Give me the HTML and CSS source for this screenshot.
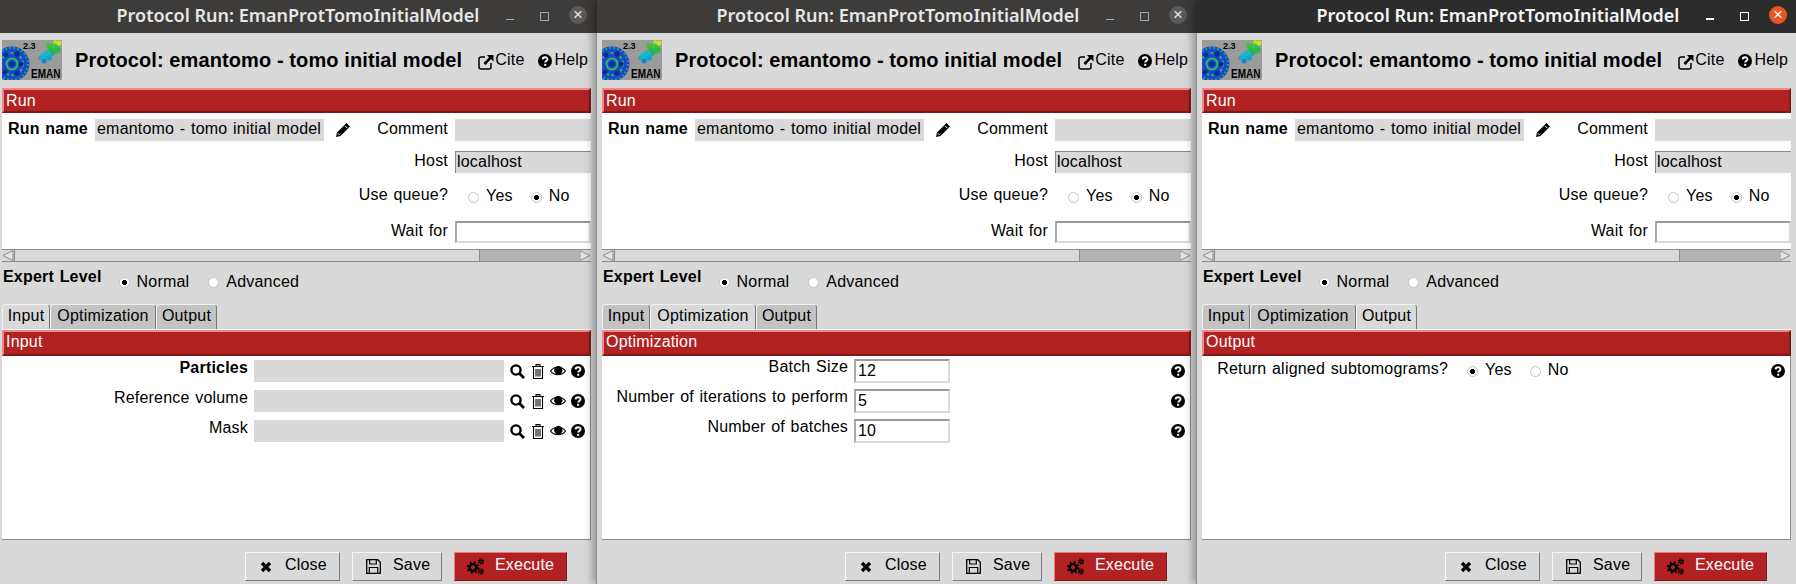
FILE: index.html
```html
<!DOCTYPE html>
<html>
<head>
    <title>Protocol Run: EmanProtTomoInitialModel</title>
    <link rel="stylesheet" href="styles.css">
</head>
<body>
  <svg class="defs" xmlns="http://www.w3.org/2000/svg">
    <symbol id="i-link" viewBox="0 0 16 16">
      <path d="M7 3H3a2 2 0 0 0-2 2v8a2 2 0 0 0 2 2h8a2 2 0 0 0 2-2V9" fill="none" stroke="#000" stroke-width="1.5"/>
      <path d="M9 1h6.500v6.500L13 5 7.500 11 5.500 9 11 3.500z" fill="#000"/>
    </symbol>
    <symbol id="i-help" viewBox="0 0 14 14">
      <circle cx="7" cy="7" r="7" fill="#000"/>
      <path d="M4.600 5.400C4.700 2.600 9.500 2.600 9.500 5.200c0 1.800-2.300 1.700-2.300 3.300" fill="none" stroke="#fff" stroke-width="1.900"/>
      <rect x="6.200" y="9.800" width="2" height="2" fill="#fff"/>
    </symbol>
    <symbol id="i-pencil" viewBox="0 0 14 14">
      <path d="M10.500 0 14 3.500 4.500 13 0 14l1-4.500z" fill="#000"/>
      <path d="M1.800 10.200 3.800 12.200M9 2.800l2.200 2.200" fill="none" stroke="#fff" stroke-width="1"/>
    </symbol>
    <symbol id="i-search" viewBox="0 0 15 15">
      <circle cx="6" cy="6" r="4.600" fill="none" stroke="#000" stroke-width="2.400"/>
      <path d="M9.500 9.500 14 14" fill="none" stroke="#000" stroke-width="2.800"/>
    </symbol>
    <symbol id="i-trash" viewBox="0 0 12 15">
      <path d="M4 2V.6h4V2M0 2.500h12M1.500 3v11.500h9V3M4 5v7.500M6 5v7.500M8 5v7.500" fill="none" stroke="#000" stroke-width="1.100"/>
    </symbol>
    <symbol id="i-eye" viewBox="0 0 16 12">
      <path d="M.5 6C4 1 12 1 15.500 6 12 11 4 11 .5 6z" fill="#fff" stroke="#000" stroke-width="1.200"/>
      <circle cx="8.300" cy="5.300" r="4.200" fill="#000"/>
    </symbol>
    <symbol id="i-close" viewBox="0 0 12 12">
      <path d="M2 2l8 8M10 2l-8 8" fill="none" stroke="#000" stroke-width="3.400"/>
    </symbol>
    <symbol id="i-save" viewBox="0 0 15 15">
      <path d="M.7.7h11l2.600 2.600v11H.7z" fill="none" stroke="#000" stroke-width="1.300"/>
      <path d="M3.700 1v4h6.600V1M3.300 14V8.500h8.400V14" fill="none" stroke="#000" stroke-width="1.200"/>
    </symbol>
    <symbol id="i-gears" viewBox="0 0 17 17">
      <circle cx="6" cy="9.500" r="3.400" fill="none" stroke="#000" stroke-width="2.400"/>
      <circle cx="6" cy="9.500" r="5.300" fill="none" stroke="#000" stroke-width="1.800" stroke-dasharray="2.100 2.060"/>
      <circle cx="14" cy="3.500" r="1.400" fill="none" stroke="#000" stroke-width="1.300"/>
      <circle cx="14" cy="3.500" r="2.700" fill="none" stroke="#000" stroke-width="1.200" stroke-dasharray="1.100 1.020"/>
      <circle cx="14" cy="13.500" r="1.400" fill="none" stroke="#000" stroke-width="1.300"/>
      <circle cx="14" cy="13.500" r="2.700" fill="none" stroke="#000" stroke-width="1.200" stroke-dasharray="1.100 1.020"/>
    </symbol>
    <symbol id="i-logo" viewBox="0 0 60 40">
      <rect width="60" height="40" fill="#9b9b9b"/>
      <circle cx="10" cy="24" r="17.500" fill="#1b45d0"/>
      <circle cx="10" cy="24" r="16" fill="none" stroke="#1fa868" stroke-width="2" stroke-dasharray="2 2"/>
      <circle cx="10" cy="24" r="11" fill="none" stroke="#1fb060" stroke-width="2.200" stroke-dasharray="3 2"/>
      <circle cx="10" cy="24" r="5.500" fill="none" stroke="#2ec050" stroke-width="2"/>
      <circle cx="4" cy="15" r="2.500" fill="#0d2a8c"/>
      <circle cx="15" cy="14" r="2.500" fill="#0d2a8c"/>
      <circle cx="19" cy="24" r="2.500" fill="#0d2a8c"/>
      <circle cx="10" cy="24" r="2.500" fill="#0d2a8c"/>
      <circle cx="15" cy="33" r="2.500" fill="#0d2a8c"/>
      <circle cx="3" cy="32" r="2.500" fill="#0d2a8c"/>
      <circle cx="49" cy="8" r="3.500" fill="#2fb84a"/>
      <circle cx="53" cy="5" r="3.500" fill="#3cc63c"/>
      <circle cx="55" cy="10" r="3.500" fill="#2fb84a"/>
      <circle cx="50" cy="13" r="3" fill="#22b070"/>
      <circle cx="57" cy="3" r="2.500" fill="#d8e01e"/>
      <circle cx="53" cy="2" r="2" fill="#b8d820"/>
      <circle cx="46" cy="5" r="2" fill="#48c030"/>
      <circle cx="45" cy="14" r="3.500" fill="#14b8c9"/>
      <circle cx="41" cy="17" r="3.500" fill="#14b8c9"/>
      <circle cx="47" cy="18" r="3" fill="#14a4d0"/>
      <circle cx="42" cy="21" r="2.500" fill="#1a7fd0"/>
      <circle cx="38" cy="18" r="1.800" fill="#12a8d0"/>
    </symbol>
  </svg>

  <div class="window">
    <div class="titlebar">
      <div class="title-text">Protocol Run: EmanProtTomoInitialModel</div>
      <div class="controls">
        <span class="ctl"><span class="ctl-min"></span></span>
        <span class="ctl"><span class="ctl-max"></span></span>
        <span class="ctl"><span class="ctl-close">&#215;</span></span>
      </div>
    </div>
    <div class="header">
      <div class="logo">
        <svg class="logo-img"><use href="#i-logo"/></svg>
        <span class="logo-ver">2.3</span>
        <span class="logo-name">EMAN</span>
      </div>
      <div class="proto-title">Protocol: emantomo - tomo initial model</div>
      <div class="hlink cite"><svg class="ico-link"><use href="#i-link"/></svg>Cite</div>
      <div class="hlink help"><svg class="ico-14"><use href="#i-help"/></svg>Help</div>
    </div>
    <div class="bar">Run</div>
    <div class="run-panel">
      <div class="run-name">Run name</div>
      <div class="field">emantomo - tomo initial model</div>
      <div class="pencil"><svg class="ico-14"><use href="#i-pencil"/></svg></div>
      <div class="run-label">Comment</div>
      <div class="field"></div>
      <div class="run-label col4">Host</div>
      <div class="field sunken">localhost</div>
      <div class="run-label col4 queue-label">Use queue?</div>
      <div class="radios queue">
        <input type="radio" name="q1"><label>Yes</label>
        <input type="radio" name="q1" checked><label>No</label>
      </div>
      <div class="run-label col4 wait">Wait for</div>
      <div class="field entry wait"></div>
    </div>
    <div class="hscroll">
      <span class="sb-arrow"><svg class="sb-ico" viewBox="0 0 12 11"><path d="M11 .5v10L1 5.500z" fill="#e4e4e4" stroke="#8a8a8a"/></svg></span>
      <span class="sb-thumb"></span>
      <span class="sb-trough"></span>
      <span class="sb-arrow"><svg class="sb-ico" viewBox="0 0 12 11"><path d="M1 .5v10L11 5.500z" fill="#e4e4e4" stroke="#8a8a8a"/></svg></span>
    </div>
    <div class="expert">
      <div class="expert-label">Expert Level</div>
      <div class="radios">
        <input type="radio" name="e1" checked><label>Normal</label>
        <input type="radio" name="e1"><label>Advanced</label>
      </div>
    </div>
    <div class="tabs">
      <div class="tab tab-input selected">Input</div>
      <div class="tab tab-opt">Optimization</div>
      <div class="tab tab-out">Output</div>
    </div>
    <div class="tab-line"></div>
    <div class="bar tab-bar">Input</div>
    <div class="form-panel">
      <div class="row">
        <div class="row-label"><b>Particles</b></div>
        <div class="field pointer"></div>
        <div class="row-icons">
          <svg class="ico-search"><use href="#i-search"/></svg>
          <svg class="ico-trash"><use href="#i-trash"/></svg>
          <svg class="ico-eye"><use href="#i-eye"/></svg>
          <svg class="ico-14"><use href="#i-help"/></svg>
        </div>
      </div>
      <div class="row">
        <div class="row-label">Reference volume</div>
        <div class="field pointer"></div>
        <div class="row-icons">
          <svg class="ico-search"><use href="#i-search"/></svg>
          <svg class="ico-trash"><use href="#i-trash"/></svg>
          <svg class="ico-eye"><use href="#i-eye"/></svg>
          <svg class="ico-14"><use href="#i-help"/></svg>
        </div>
      </div>
      <div class="row">
        <div class="row-label">Mask</div>
        <div class="field pointer"></div>
        <div class="row-icons">
          <svg class="ico-search"><use href="#i-search"/></svg>
          <svg class="ico-trash"><use href="#i-trash"/></svg>
          <svg class="ico-eye"><use href="#i-eye"/></svg>
          <svg class="ico-14"><use href="#i-help"/></svg>
        </div>
      </div>
    </div>
    <div class="footer">
      <div class="btn btn-close"><svg class="ico-x"><use href="#i-close"/></svg>Close</div>
      <div class="btn btn-save"><svg class="ico-save"><use href="#i-save"/></svg>Save</div>
      <div class="btn btn-exec"><svg class="ico-gears"><use href="#i-gears"/></svg>Execute</div>
    </div>
  </div>

  <div class="window">
    <div class="titlebar">
      <div class="title-text">Protocol Run: EmanProtTomoInitialModel</div>
      <div class="controls">
        <span class="ctl"><span class="ctl-min"></span></span>
        <span class="ctl"><span class="ctl-max"></span></span>
        <span class="ctl"><span class="ctl-close">&#215;</span></span>
      </div>
    </div>
    <div class="header">
      <div class="logo">
        <svg class="logo-img"><use href="#i-logo"/></svg>
        <span class="logo-ver">2.3</span>
        <span class="logo-name">EMAN</span>
      </div>
      <div class="proto-title">Protocol: emantomo - tomo initial model</div>
      <div class="hlink cite"><svg class="ico-link"><use href="#i-link"/></svg>Cite</div>
      <div class="hlink help"><svg class="ico-14"><use href="#i-help"/></svg>Help</div>
    </div>
    <div class="bar">Run</div>
    <div class="run-panel">
      <div class="run-name">Run name</div>
      <div class="field">emantomo - tomo initial model</div>
      <div class="pencil"><svg class="ico-14"><use href="#i-pencil"/></svg></div>
      <div class="run-label">Comment</div>
      <div class="field"></div>
      <div class="run-label col4">Host</div>
      <div class="field sunken">localhost</div>
      <div class="run-label col4 queue-label">Use queue?</div>
      <div class="radios queue">
        <input type="radio" name="q2"><label>Yes</label>
        <input type="radio" name="q2" checked><label>No</label>
      </div>
      <div class="run-label col4 wait">Wait for</div>
      <div class="field entry wait"></div>
    </div>
    <div class="hscroll">
      <span class="sb-arrow"><svg class="sb-ico" viewBox="0 0 12 11"><path d="M11 .5v10L1 5.500z" fill="#e4e4e4" stroke="#8a8a8a"/></svg></span>
      <span class="sb-thumb"></span>
      <span class="sb-trough"></span>
      <span class="sb-arrow"><svg class="sb-ico" viewBox="0 0 12 11"><path d="M1 .5v10L11 5.500z" fill="#e4e4e4" stroke="#8a8a8a"/></svg></span>
    </div>
    <div class="expert">
      <div class="expert-label">Expert Level</div>
      <div class="radios">
        <input type="radio" name="e2" checked><label>Normal</label>
        <input type="radio" name="e2"><label>Advanced</label>
      </div>
    </div>
    <div class="tabs">
      <div class="tab tab-input">Input</div>
      <div class="tab tab-opt selected">Optimization</div>
      <div class="tab tab-out">Output</div>
    </div>
    <div class="tab-line"></div>
    <div class="bar tab-bar">Optimization</div>
    <div class="form-panel tight">
      <div class="row">
        <div class="row-label">Batch Size</div>
        <div class="field entry short">12</div>
        <div class="row-icons"><svg class="ico-14"><use href="#i-help"/></svg></div>
      </div>
      <div class="row">
        <div class="row-label">Number of iterations to perform</div>
        <div class="field entry short">5</div>
        <div class="row-icons"><svg class="ico-14"><use href="#i-help"/></svg></div>
      </div>
      <div class="row">
        <div class="row-label">Number of batches</div>
        <div class="field entry short">10</div>
        <div class="row-icons"><svg class="ico-14"><use href="#i-help"/></svg></div>
      </div>
    </div>
    <div class="footer">
      <div class="btn btn-close"><svg class="ico-x"><use href="#i-close"/></svg>Close</div>
      <div class="btn btn-save"><svg class="ico-save"><use href="#i-save"/></svg>Save</div>
      <div class="btn btn-exec"><svg class="ico-gears"><use href="#i-gears"/></svg>Execute</div>
    </div>
  </div>

  <div class="window focused">
    <div class="titlebar">
      <div class="title-text">Protocol Run: EmanProtTomoInitialModel</div>
      <div class="controls">
        <span class="ctl"><span class="ctl-min"></span></span>
        <span class="ctl"><span class="ctl-max"></span></span>
        <span class="ctl"><span class="ctl-close">&#215;</span></span>
      </div>
    </div>
    <div class="header">
      <div class="logo">
        <svg class="logo-img"><use href="#i-logo"/></svg>
        <span class="logo-ver">2.3</span>
        <span class="logo-name">EMAN</span>
      </div>
      <div class="proto-title">Protocol: emantomo - tomo initial model</div>
      <div class="hlink cite"><svg class="ico-link"><use href="#i-link"/></svg>Cite</div>
      <div class="hlink help"><svg class="ico-14"><use href="#i-help"/></svg>Help</div>
    </div>
    <div class="bar">Run</div>
    <div class="run-panel">
      <div class="run-name">Run name</div>
      <div class="field">emantomo - tomo initial model</div>
      <div class="pencil"><svg class="ico-14"><use href="#i-pencil"/></svg></div>
      <div class="run-label">Comment</div>
      <div class="field"></div>
      <div class="run-label col4">Host</div>
      <div class="field sunken">localhost</div>
      <div class="run-label col4 queue-label">Use queue?</div>
      <div class="radios queue">
        <input type="radio" name="q3"><label>Yes</label>
        <input type="radio" name="q3" checked><label>No</label>
      </div>
      <div class="run-label col4 wait">Wait for</div>
      <div class="field entry wait"></div>
    </div>
    <div class="hscroll">
      <span class="sb-arrow"><svg class="sb-ico" viewBox="0 0 12 11"><path d="M11 .5v10L1 5.500z" fill="#e4e4e4" stroke="#8a8a8a"/></svg></span>
      <span class="sb-thumb"></span>
      <span class="sb-trough"></span>
      <span class="sb-arrow"><svg class="sb-ico" viewBox="0 0 12 11"><path d="M1 .5v10L11 5.500z" fill="#e4e4e4" stroke="#8a8a8a"/></svg></span>
    </div>
    <div class="expert">
      <div class="expert-label">Expert Level</div>
      <div class="radios">
        <input type="radio" name="e3" checked><label>Normal</label>
        <input type="radio" name="e3"><label>Advanced</label>
      </div>
    </div>
    <div class="tabs">
      <div class="tab tab-input">Input</div>
      <div class="tab tab-opt">Optimization</div>
      <div class="tab tab-out selected">Output</div>
    </div>
    <div class="tab-line"></div>
    <div class="bar tab-bar">Output</div>
    <div class="form-panel">
      <div class="row return-row">
        <div class="row-label">Return aligned subtomograms?</div>
        <div class="radios return">
          <input type="radio" name="r3" checked><label>Yes</label>
          <input type="radio" name="r3"><label>No</label>
        </div>
        <div class="row-icons"><svg class="ico-14"><use href="#i-help"/></svg></div>
      </div>
    </div>
    <div class="footer">
      <div class="btn btn-close"><svg class="ico-x"><use href="#i-close"/></svg>Close</div>
      <div class="btn btn-save"><svg class="ico-save"><use href="#i-save"/></svg>Save</div>
      <div class="btn btn-exec"><svg class="ico-gears"><use href="#i-gears"/></svg>Execute</div>
    </div>
  </div>
</body>
</html>
```

FILE: styles.css
```css
html, body {
    margin: 0;
    height: 584px;
    overflow: hidden;
}
body {
    display: flex;
    font-family: "Liberation Sans", Arial, sans-serif;
    font-size: 16px;
    letter-spacing: 0.2px;
    word-spacing: 1px;
    color: #000;
    background-color: #d9d9d9;
}
.defs {
    display: none;
}

/* windows */
.window {
    position: relative;
    flex: none;
    width: 600px;
    height: 584px;
    display: flex;
    flex-direction: column;
    background-color: #d9d9d9;
    box-shadow: -3px 0 9px rgba(0, 0, 0, 0.35);
    border-left: 1px solid #8e8e8e;
    box-sizing: border-box;
}
.window:first-of-type {
    margin-left: -4px;
}
.titlebar {
    flex: none;
    height: 33px;
    margin-left: -1px;
    padding-left: 3px;
    display: grid;
    grid-template-columns: 1fr auto 1fr;
    align-items: center;
    background-color: #3d3c3a;
    color: #e6e6e6;
    border-left: 1px solid #2c2b2a;
}
.focused .titlebar {
    background-color: #2c2c2c;
    color: #f4f4f4;
}
.title-text {
    grid-column: 2;
    padding-bottom: 3px;
    font-family: "Noto Sans", sans-serif;
    font-size: 18px;
    font-weight: 600;
    letter-spacing: 0;
    word-spacing: 0;
    white-space: nowrap;
}
.controls {
    grid-column: 3;
    display: flex;
    justify-content: flex-end;
    padding-right: 1px;
}
.ctl {
    width: 34px;
    height: 33px;
    display: flex;
    align-items: center;
    justify-content: center;
}
.ctl-min {
    width: 8px;
    height: 1px;
    margin-top: 5px;
    background-color: #a8a8a8;
}
.ctl-max {
    width: 7px;
    height: 7px;
    border: 1px solid #a8a8a8;
}
.ctl-close {
    width: 18px;
    height: 18px;
    margin-top: -3px;
    border-radius: 50%;
    background-color: #5b5a58;
    color: #e6e6e6;
    font-size: 17px;
    line-height: 18px;
    text-align: center;
}
.focused .ctl-min, .focused .ctl-max {
    background-color: #fff;
    border-color: #fff;
}
.focused .ctl-max {
    background-color: transparent;
}
.focused .ctl-min {
    width: 8px;
    height: 2px;
}
.focused .ctl-close {
    background-color: #e95420;
    color: #fff;
}

/* header */
.header {
    flex: none;
    height: 55px;
    display: flex;
    align-items: center;
    white-space: nowrap;
}
.logo {
    position: relative;
    width: 60px;
    height: 40px;
    margin-left: 5px;
    margin-top: -2px;
    flex: none;
    overflow: hidden;
}
.logo-img {
    display: block;
    width: 60px;
    height: 40px;
}
.logo-ver {
    position: absolute;
    left: 21px;
    top: 1px;
    font-size: 9px;
    font-weight: bold;
    line-height: 10px;
    letter-spacing: 0;
}
.logo-name {
    position: absolute;
    left: 29px;
    top: 28px;
    font-size: 10px;
    font-weight: bold;
    line-height: 11px;
    letter-spacing: 0;
    transform: scaleY(1.2);
}
.proto-title {
    margin-left: 13px;
    font-size: 20px;
    font-weight: bold;
    letter-spacing: 0.1px;
    word-spacing: 0;
}
.hlink {
    display: flex;
    align-items: center;
    margin-top: -2px;
}
.cite {
    margin-left: 16px;
}
.help {
    margin-left: 13px;
}
.ico-link {
    width: 16px;
    height: 16px;
    margin: 4px 1px 0 0;
}
.ico-14 {
    width: 14px;
    height: 14px;
    flex: none;
}
.help .ico-14 {
    margin: 2px 3px 0 0;
}

/* red section bars */
.bar {
    flex: none;
    height: 25px;
    margin: 0 0 0 5px;
    width: 589px;
    box-sizing: border-box;
    padding-left: 2px;
    line-height: 21px;
    color: #fff;
    background-color: #b22222;
    border-top: 2px solid #ee8a8a;
    border-left: 2px solid #ee8a8a;
    border-bottom: 2px solid #7c1818;
    border-right: 2px solid #7c1818;
}
.tab-bar {
    height: 26px;
    line-height: 20px;
}

/* run panel */
.run-panel {
    flex: none;
    height: 136px;
    width: 589px;
    margin-left: 5px;
    box-sizing: border-box;
    padding: 6px 0 0 6px;
    background-color: #fff;
    display: grid;
    grid-template-columns: 87px 229px 34px 97px 136px;
    grid-auto-rows: 22px;
    row-gap: 10px;
    overflow: hidden;
}
.run-name {
    font-weight: bold;
    line-height: 20px;
}
.field {
    height: 22px;
    box-sizing: border-box;
    padding-left: 2px;
    line-height: 20px;
    background-color: #d9d9d9;
    white-space: nowrap;
    overflow: hidden;
}
.pencil {
    padding: 4px 0 0 12px;
}
.run-label {
    padding-right: 7px;
    text-align: right;
    line-height: 20px;
}
.queue-label {
    line-height: 24px;
}
.col4 {
    grid-column: 4;
}
.sunken {
    border-left: 1px solid #888;
    border-top: 1px solid #888;
    padding-left: 1px;
    line-height: 19px;
}
.entry {
    background-color: #fff;
    border: 2px solid #d9d9d9;
    border-top-color: #999;
    border-left-color: #aaa;
    line-height: 20px;
    padding-left: 2px;
}
.wait {
    margin-top: 6px;
}
.radios {
    display: flex;
    align-items: center;
    height: 22px;
}
.radios input {
    appearance: none;
    -webkit-appearance: none;
    flex: none;
    box-sizing: border-box;
    width: 11px;
    height: 11px;
    margin: 2px 7px 0 0;
    border-radius: 50%;
    border: 1px solid #c4c4c4;
    background: #fff;
}
.radios input:checked {
    background: radial-gradient(circle, #000 0, #000 2.200px, #fff 2.800px);
}
.radios label {
    margin-right: 18px;
}
.radios label:last-child {
    margin-right: 0;
}
.queue {
    padding-top: 2px;
}
.queue input:first-child {
    margin-left: 13px;
}

/* scrollbar */
.hscroll {
    flex: none;
    display: flex;
    height: 11px;
    width: 589px;
    margin-left: 5px;
    border-top: 1px solid #8a8a8a;
    border-bottom: 1px solid #8a8a8a;
    background-color: #b3b3b3;
}
.sb-arrow {
    flex: none;
    width: 12px;
    display: flex;
    align-items: center;
    justify-content: center;
    background-color: #d9d9d9;
}
.sb-ico {
    width: 12px;
    height: 11px;
}
.sb-thumb {
    flex: none;
    width: 466px;
    box-sizing: border-box;
    background-color: #d9d9d9;
    border-left: 1px solid #8a8a8a;
    border-right: 1px solid #8a8a8a;
}
.sb-trough {
    flex: 1;
}

/* expert level */
.expert {
    flex: none;
    height: 42px;
    display: flex;
    align-items: center;
    padding-left: 6px;
}
.expert-label {
    font-weight: bold;
    margin: -13px 17px 0 0;
    white-space: nowrap;
}
.expert .radios {
    margin-top: -3px;
}
.expert .radios label {
    margin-right: 19px;
}

/* tabs */
.tabs {
    flex: none;
    display: flex;
    height: 25px;
    margin-left: 5px;
}
.tab {
    box-sizing: border-box;
    height: 25px;
    padding-top: 1px;
    text-align: center;
    background-color: #c3c3c3;
    border-top: 1px solid #f2f2f2;
    border-left: 1px solid #f2f2f2;
    border-right: 1px solid #777;
    border-radius: 4px 4px 0 0;
    line-height: 20px;
}
.tab.selected {
    background-color: #d9d9d9;
}
.tab-input {
    width: 48px;
}
.tab-opt {
    width: 106px;
}
.tab-out {
    width: 61px;
}
.tab-line {
    flex: none;
    height: 1px;
    width: 589px;
    margin-left: 5px;
    background-color: #f4f4f4;
}

/* form panels under the tabs */
.form-panel {
    flex: none;
    height: 184px;
    width: 589px;
    margin-left: 5px;
    box-sizing: border-box;
    padding-top: 4px;
    background-color: #fff;
    border-right: 1px solid #8a8a8a;
    border-bottom: 1px solid #8a8a8a;
    display: flex;
    flex-direction: column;
    gap: 8px;
}
.form-panel.tight {
    padding-top: 3px;
    gap: 6px;
}
.row {
    display: flex;
    align-items: flex-start;
    white-space: nowrap;
}
.row-label {
    flex: none;
    width: 246px;
    text-align: right;
    line-height: 15px;
}
.tight .row-label {
    line-height: 16px;
}
.return-row .row-label {
    line-height: 17px;
}
.field.pointer {
    flex: none;
    width: 250px;
    margin-left: 6px;
}
.field.short {
    flex: none;
    width: 96px;
    height: 24px;
    margin-left: 6px;
}
.row-icons {
    margin-left: auto;
    display: flex;
    align-items: center;
    height: 22px;
    padding: 0 5px 0 0;
}
.tight .row-icons {
    height: 24px;
}
.ico-search {
    width: 15px;
    height: 15px;
    flex: none;
}
.ico-trash {
    width: 12px;
    height: 15px;
    margin-left: 7px;
    flex: none;
}
.ico-eye {
    width: 16px;
    height: 12px;
    margin: 0 5px 0 6px;
    flex: none;
}
.radios.return {
    margin-top: -1px;
}
.radios.return input:first-child {
    margin-left: 19px;
}

/* footer buttons */
.footer {
    flex: none;
    display: flex;
    justify-content: flex-end;
    gap: 12px;
    margin-top: 12px;
    padding-right: 29px;
}
.btn {
    box-sizing: border-box;
    height: 29px;
    padding-bottom: 4px;
    display: flex;
    align-items: center;
    background-color: #d9d9d9;
    border: 1px solid;
    border-color: #f5f5f5 #7d7d7d #7d7d7d #f5f5f5;
}
.btn-close {
    width: 95px;
    padding-left: 14px;
}
.btn-save {
    width: 90px;
    padding-left: 13px;
}
.btn-exec {
    width: 113px;
    padding-left: 12px;
    color: #fff;
    background-color: #b22222;
    border-color: #e47c7c #7c1818 #7c1818 #e47c7c;
}
.ico-x {
    width: 12px;
    height: 12px;
    margin: 4px 13px 0 0;
}
.ico-save {
    width: 15px;
    height: 15px;
    margin: 4px 12px 0 0;
}
.ico-gears {
    width: 17px;
    height: 17px;
    margin: 4px 11px 0 0;
}
```
